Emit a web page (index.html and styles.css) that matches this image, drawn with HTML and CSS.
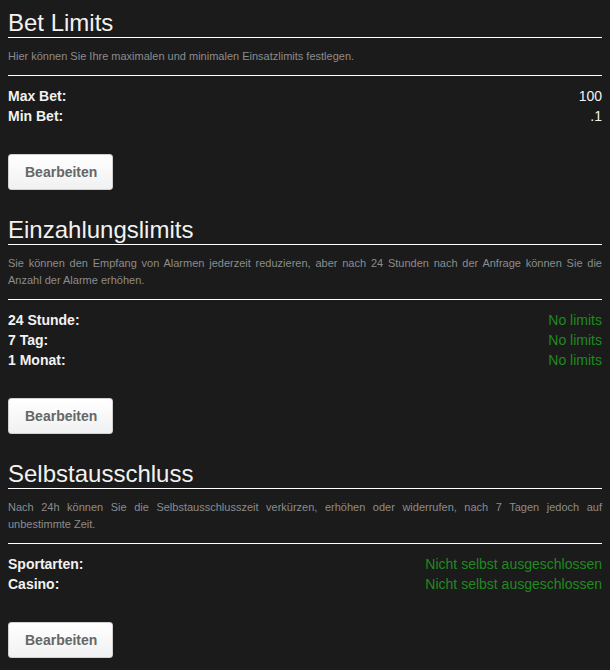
FILE: index.html
```html
<!DOCTYPE html>
<html lang="de">
<head>
<meta charset="utf-8">
<title>Limits</title>
<link rel="stylesheet" href="styles.css">
</head>
<body>
<main class="page">
  <section class="block">
    <h2 class="block-title">Bet Limits</h2>
    <p class="block-desc">Hier können Sie Ihre maximalen und minimalen Einsatzlimits festlegen.</p>
    <dl class="rows">
      <div class="row"><dt>Max Bet:</dt><dd class="val">100</dd></div>
      <div class="row"><dt>Min Bet:</dt><dd class="val">.1</dd></div>
    </dl>
    <button class="btn" type="button">Bearbeiten</button>
  </section>

  <section class="block">
    <h2 class="block-title">Einzahlungslimits</h2>
    <p class="block-desc">Sie können den Empfang von Alarmen jederzeit reduzieren, aber nach 24 Stunden nach der Anfrage können Sie die Anzahl der Alarme erhöhen.</p>
    <dl class="rows">
      <div class="row"><dt>24 Stunde:</dt><dd class="val ok">No limits</dd></div>
      <div class="row"><dt>7 Tag:</dt><dd class="val ok">No limits</dd></div>
      <div class="row"><dt>1 Monat:</dt><dd class="val ok">No limits</dd></div>
    </dl>
    <button class="btn" type="button">Bearbeiten</button>
  </section>

  <section class="block">
    <h2 class="block-title">Selbstausschluss</h2>
    <p class="block-desc">Nach 24h können Sie die Selbstausschlusszeit verkürzen, erhöhen oder widerrufen, nach 7 Tagen jedoch auf unbestimmte Zeit.</p>
    <dl class="rows">
      <div class="row"><dt>Sportarten:</dt><dd class="val ok">Nicht selbst ausgeschlossen</dd></div>
      <div class="row"><dt>Casino:</dt><dd class="val ok">Nicht selbst ausgeschlossen</dd></div>
    </dl>
    <button class="btn" type="button">Bearbeiten</button>
  </section>
</main>
</body>
</html>
```

FILE: styles.css
```css
html, body {
  margin: 0;
  padding: 0;
  background: #1b1b1b;
}

body {
  padding: 8px;
  font-family: "Liberation Sans", Arial, sans-serif;
  color: #eeeeee;
}

.page {
  display: flex;
  flex-direction: column;
  gap: 26px;
  padding-top: 1px;
}

.block {
  display: flex;
  flex-direction: column;
  align-items: stretch;
}

.block-title {
  margin: 0;
  font-size: 24px;
  font-weight: normal;
  line-height: 28px;
  color: #f2f2f2;
  border-bottom: 1px solid #ffffff;
}

.block-desc {
  margin: 0;
  padding: 10px 0;
  font-size: 11px;
  line-height: 17px;
  color: #8c8c8c;
  text-align: justify;
  border-bottom: 1px solid #ffffff;
}

.rows {
  margin: 10px 0 28px;
  padding: 0;
  display: flex;
  flex-direction: column;
}

.row {
  display: flex;
  justify-content: space-between;
  align-items: center;
  height: 20px;
  font-size: 14px;
  line-height: 20px;
}

.row dt {
  font-weight: bold;
  color: #f2f2f2;
}

.row dd {
  margin: 0;
}

.val {
  color: #f2f2f2;
}

.val.ok {
  color: #1f8a1f;
}

.btn {
  align-self: flex-start;
  box-sizing: border-box;
  width: 105px;
  height: 36px;
  padding: 0 16px;
  border: 1px solid #d0d0d0;
  border-radius: 3px;
  background: linear-gradient(#ffffff, #f1f1f1);
  font-family: "Liberation Sans", Arial, sans-serif;
  font-size: 14px;
  font-weight: bold;
  color: #666666;
  cursor: pointer;
}
```
